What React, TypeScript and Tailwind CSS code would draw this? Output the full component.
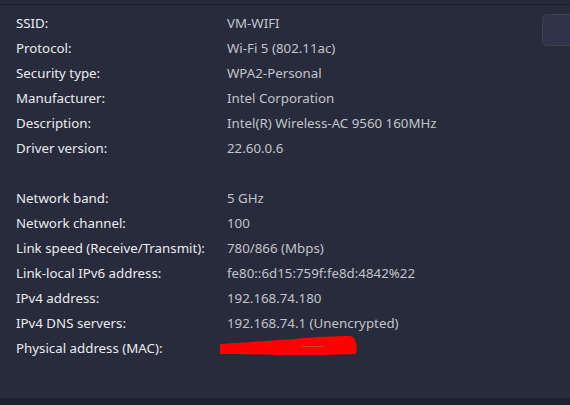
const rowsTop: [string, string][] = [
  ['SSID:', 'VM-WIFI'],
  ['Protocol:', 'Wi-Fi 5 (802.11ac)'],
  ['Security type:', 'WPA2-Personal'],
  ['Manufacturer:', 'Intel Corporation'],
  ['Description:', 'Intel(R) Wireless-AC 9560 160MHz'],
  ['Driver version:', '22.60.0.6'],
];

const rowsBottom: [string, string][] = [
  ['Network band:', '5 GHz'],
  ['Network channel:', '100'],
  ['Link speed (Receive/Transmit):', '780/866 (Mbps)'],
  ['Link-local IPv6 address:', 'fe80::6d15:759f:fe8d:4842%22'],
  ['IPv4 address:', '192.168.74.180'],
  ['IPv4 DNS servers:', '192.168.74.1 (Unencrypted)'],
];

function Row({ label, value }: { label: string; value: React.ReactNode }) {
  return (
    <div className="flex h-[25px] items-center">
      <div className="w-[211px] shrink-0 text-[#ebebee]">{label}</div>
      <div className="text-[#c3c4ca]">{value}</div>
    </div>
  );
}

export default function App() {
  return (
    <div
      className="relative h-[405px] w-[570px] overflow-hidden bg-[#272b3c] text-[13.3px]"
      style={{ fontFamily: '"Segoe UI", "Noto Sans", "Open Sans", sans-serif' }}
    >
      <div className="h-[5px] border-b border-[#1c1f2c] bg-[#252a3a]" />

      {/* details button, cut off at the right edge */}
      <div className="absolute right-[-12px] top-[14px] h-[32px] w-[40px] rounded-[5px] border border-[#3b3f51] bg-[#30344a]" />

      <div className="px-4 pt-[6px]">
        {rowsTop.map(([l, v]) => (
          <Row key={l} label={l} value={v} />
        ))}
        <div className="h-[25px]" />
        {rowsBottom.map(([l, v]) => (
          <Row key={l} label={l} value={v} />
        ))}
        <div className="relative flex h-[25px] items-center">
          <div className="w-[211px] shrink-0 text-[#ebebee]">Physical address (MAC):</div>
          {/* redacted MAC */}
          <svg
            className="absolute left-[198px] top-[-2px] h-[28px] w-[150px]"
            width="150"
            height="28"
            viewBox="0 0 150 28"
          >
            <path
              d="M6 10 C20 9 40 8 80 5 C100 3 120 2 136 2 C141 3 144 10 142 20 C120 21 100 21 80 21 C50 21 30 20 6 20 Z"
              fill="#ff0000"
            />
            <rect x="88" y="12" width="22" height="1" fill="#c0404a" />
          </svg>
        </div>
      </div>

      <div className="absolute bottom-0 left-0 h-[7px] w-full bg-[#1d2131]" />
    </div>
  );
}
